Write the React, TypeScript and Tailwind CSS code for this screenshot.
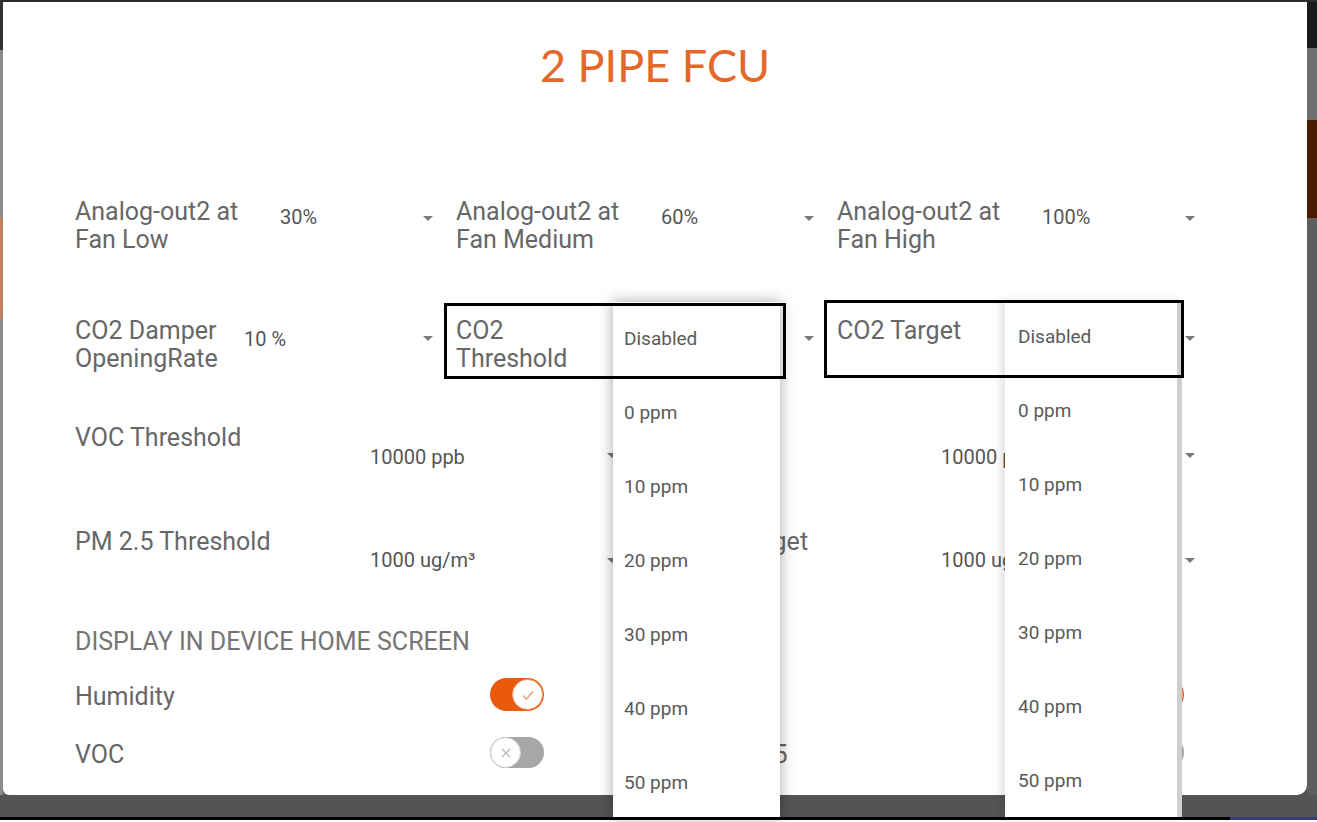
import React from "react";

const Arrow = ({ mt }: { mt: string }) => (
  <div className={`w-[10px] h-[5px] ${mt} shrink-0`}>
    <svg width="10" height="5" viewBox="0 0 10 5">
      <polygon points="0,0 10,0 5,5" fill="#7a7a7a" />
    </svg>
  </div>
);

const ToggleOn = () => (
  <div className="w-[54px] h-[33px] rounded-full bg-[#ea5a0c] flex items-center justify-end pr-[1px] shrink-0">
    <div className="w-[31px] h-[31px] rounded-full bg-white border-[1.5px] border-[#f0a070] flex items-center justify-center">
      <svg width="16" height="16" viewBox="0 0 16 16">
        <path d="M3 8.5 L6.5 12 L13 4.5" fill="none" stroke="#f2a27a" strokeWidth="1.6" />
      </svg>
    </div>
  </div>
);

const ToggleOff = () => (
  <div className="w-[54px] h-[31px] rounded-full bg-[#a7a7a7] flex items-center justify-start shrink-0">
    <div className="w-[31px] h-[31px] rounded-full bg-white border-[1.5px] border-[#cfcfcf] flex items-center justify-center">
      <svg width="14" height="14" viewBox="0 0 14 14">
        <path d="M3 3 L11 11 M11 3 L3 11" fill="none" stroke="#bdbdbd" strokeWidth="1.5" />
      </svg>
    </div>
  </div>
);

const items = ["Disabled", "0 ppm", "10 ppm", "20 ppm", "30 ppm", "40 ppm", "50 ppm"];

export default function App() {
  const label = "text-[25px] leading-[28px] text-[#676767] whitespace-nowrap";
  const value = "text-[20px] leading-[24px] text-[#555555] whitespace-nowrap";
  return (
    <div
      className="w-[1317px] h-[822px] relative overflow-hidden bg-[#555555] flex flex-col"
      style={{ fontFamily: "Roboto, 'Liberation Sans', sans-serif" }}
    >
      <div className="h-[2px] bg-[#2b2b2b] shrink-0" />
      <div className="h-[793px] flex shrink-0">
        {/* left strip */}
        <div className="w-[3px] flex flex-col">
          <div className="h-[48px] bg-[#333333]" />
          <div className="h-[168px] bg-[#8c8c8c]" />
          <div className="h-[100px] bg-[#c28064]" />
          <div className="flex-1 bg-[#8c8c8c]" />
        </div>
        {/* modal */}
        <div className="w-[1304px] bg-white rounded-bl-[6px] rounded-br-[10px] flex flex-col pl-[72px]">
          <div
            className="pt-[35px] h-[91px] text-center text-[45px] leading-[56px] text-[#e4682a] -ml-[72px]"
            style={{ fontFamily: "Lato, 'Open Sans', sans-serif" }}
          >
            2 PIPE FCU
          </div>
          {/* Row 1 */}
          <div className="mt-[105px] h-[119px] flex items-start">
            {[
              ["Analog-out2 at", "Fan Low", "30%"],
              ["Analog-out2 at", "Fan Medium", "60%"],
              ["Analog-out2 at", "Fan High", "100%"],
            ].map(([a, b, v], i) => (
              <div key={i} className="w-[381px] flex items-start shrink-0">
                <div className={`w-[205px] ${label}`}>
                  <div>{a}</div>
                  <div>{b}</div>
                </div>
                <div className={`w-[143px] mt-[7px] ${value} text-[18px]`}>{v}</div>
                <Arrow mt="mt-[18px]" />
              </div>
            ))}
          </div>
          {/* Row 2 */}
          <div className="h-[107px] flex items-start">
            <div className="w-[381px] flex items-start shrink-0">
              <div className={`w-[169px] ${label}`}>
                <div>CO2 Damper</div>
                <div>OpeningRate</div>
              </div>
              <div className={`w-[179px] mt-[10px] ${value} text-[18px]`}>10 %</div>
              <Arrow mt="mt-[19px]" />
            </div>
            <div className="w-[381px] flex items-start shrink-0">
              <div className={`w-[348px] ${label}`}>
                <div>CO2</div>
                <div>Threshold</div>
              </div>
              <Arrow mt="mt-[19px]" />
            </div>
            <div className="w-[381px] flex items-start shrink-0">
              <div className={`w-[348px] ${label}`}>
                <div>CO2 Target</div>
              </div>
              <Arrow mt="mt-[19px]" />
            </div>
          </div>
          {/* Row 3 */}
          <div className="h-[104px] flex items-start">
            <div className="w-[578px] flex items-start shrink-0">
              <div className={`w-[295px] ${label}`}>VOC Threshold</div>
              <div className={`w-[237px] mt-[21px] ${value}`}>10000 ppb</div>
              <Arrow mt="mt-[29px]" />
            </div>
            <div className="flex items-start">
              <div className={`w-[288px] ${label}`}>VOC Target</div>
              <div className={`w-[64px] overflow-hidden mt-[21px] ${value}`}>10000 ppb</div>
              <div className="w-[180px]" />
              <Arrow mt="mt-[29px]" />
            </div>
          </div>
          {/* Row 4 */}
          <div className="h-[100px] flex items-start">
            <div className="w-[578px] flex items-start shrink-0">
              <div className={`w-[295px] ${label}`}>PM 2.5 Threshold</div>
              <div className={`w-[237px] mt-[20px] ${value}`}>1000 ug/m³</div>
              <Arrow mt="mt-[30px]" />
            </div>
            <div className="flex items-start">
              <div className={`w-[288px] ${label}`}>PM 2.5 Target</div>
              <div className={`w-[64px] overflow-hidden mt-[20px] ${value}`}>1000 ug/m³</div>
              <div className="w-[180px]" />
              <Arrow mt="mt-[30px]" />
            </div>
          </div>
          {/* Header */}
          <div className={`h-[28px] ${label} text-[#757575]`}>DISPLAY IN DEVICE HOME SCREEN</div>
          {/* Toggle rows */}
          <div className="mt-[22px] h-[33px] flex items-center">
            <div className={`w-[415px] pt-[4px] ${label}`}>Humidity</div>
            <ToggleOn />
            <div className={`ml-[165px] w-[421px] pt-[4px] ${label}`}>CO2</div>
            <ToggleOn />
          </div>
          <div className="mt-[26px] h-[31px] flex items-center">
            <div className={`w-[415px] pt-[4px] ${label}`}>VOC</div>
            <ToggleOff />
            <div className={`ml-[165px] w-[421px] pt-[4px] ${label}`}>PM 2.5</div>
            <ToggleOff />
          </div>
        </div>
        {/* right strip */}
        <div className="w-[10px] flex flex-col">
          <div className="h-[46px] bg-[#1a1a1a]" />
          <div className="h-[72px] bg-[#6e6e6e]" />
          <div className="h-[98px] bg-[#4c1a02]" />
          <div className="flex-1 bg-[#5e5e5e]" />
        </div>
      </div>
      <div className="h-[22px] bg-[#545454] shrink-0" />
      <div className="h-[3px] flex shrink-0">
        <div className="flex-1 bg-black" />
        <div className="w-[87px] bg-[#3c3a78]" />
      </div>
      <div className="h-[2px] bg-white shrink-0" />

      {/* Dropdown 1 */}
      <div className="absolute left-[613px] top-[302px] w-[167px] h-[515px] bg-white overflow-hidden shadow-[0_0_14px_rgba(0,0,0,0.35)]">
        {items.map((t) => (
          <div key={t} className="h-[74px] flex items-center pl-[11px] text-[19px] text-[#5a5a5a]">
            {t}
          </div>
        ))}
      </div>
      {/* Dropdown 2 */}
      <div className="absolute left-[1005px] top-[300px] w-[177px] h-[517px] bg-white overflow-hidden border-r-[5px] border-[#cfcfcf] shadow-[-4px_0_8px_rgba(0,0,0,0.12)]">
        {items.map((t) => (
          <div key={t} className="h-[74px] flex items-center pl-[13px] text-[19px] text-[#5a5a5a]">
            {t}
          </div>
        ))}
      </div>
      {/* Annotation boxes */}
      <div className="absolute left-[444px] top-[303px] w-[342px] h-[76px] border-[3px] border-black" />
      <div className="absolute left-[824px] top-[300px] w-[360px] h-[78px] border-[3px] border-black" />
    </div>
  );
}
